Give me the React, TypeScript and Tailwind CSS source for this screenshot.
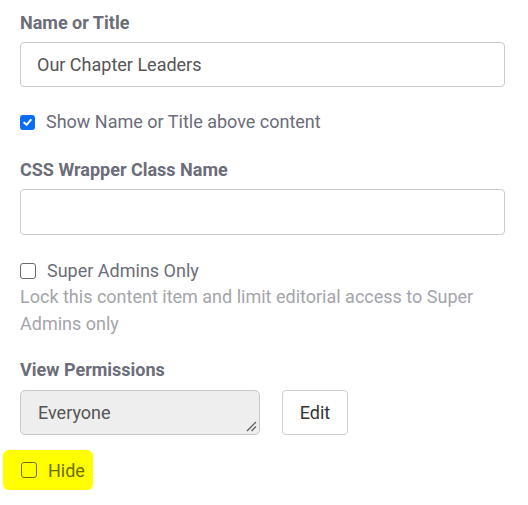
import React from "react";

function Box({ checked, olive }: { checked?: boolean; olive?: boolean }) {
  if (checked) {
    return (
      <span className="flex h-[15px] w-[15px] shrink-0 items-center justify-center rounded-[3px] bg-[#0b6cf5]">
        <svg width="11" height="11" viewBox="0 0 12 12">
          <path d="M2.5 6.2 L5 8.6 L9.6 3.2" fill="none" stroke="white" strokeWidth="2.2" strokeLinecap="round" strokeLinejoin="round" />
        </svg>
      </span>
    );
  }
  return (
    <span
      className={
        "block h-[16px] w-[16px] shrink-0 rounded-[3px] border " +
        (olive ? "border-[#6e6e08] bg-transparent" : "border-[#6b6b6b] bg-white")
      }
    />
  );
}

export default function App() {
  const font = { fontFamily: "Roboto, 'Liberation Sans', sans-serif" };
  return (
    <div className="h-[505px] w-[528px] bg-white px-[20px] pt-[11px]" style={font}>
      <div className="w-[485px]">
        <div className="text-[18px] font-bold leading-[24px] text-[#6b6d79]">Name or Title</div>
        <div className="mt-[7px] flex h-[45px] items-center rounded-[4px] border border-[#cbcbcb] px-[16px] text-[18px] text-[#555]">
          Our Chapter Leaders
        </div>
        <label className="mt-[23px] flex items-center gap-[11px] text-[18px] leading-[24px] text-[#6b6d79]">
          <Box checked />
          Show Name or Title above content
        </label>

        <div className="mt-[24px] text-[18px] font-bold leading-[24px] text-[#6b6d79]">CSS Wrapper Class Name</div>
        <div className="mt-[7px] h-[46px] rounded-[4px] border border-[#cbcbcb]" />

        <label className="mt-[24px] flex items-center gap-[11px] text-[18px] leading-[24px] text-[#6b6d79]">
          <Box />
          Super Admins Only
        </label>
        <p className="text-[18px] leading-[27px] text-[#a3a5ab]">
          Lock this content item and limit editorial access to Super Admins only
        </p>

        <div className="mt-[21px] text-[18px] font-bold leading-[24px] text-[#6b6d79]">View Permissions</div>
        <div className="mt-[8px] flex items-center gap-[22px]">
          <div className="relative flex h-[45px] w-[240px] items-center rounded-[5px] border border-[#c8c8c8] bg-[#eeeeee] px-[17px] text-[18px] text-[#555]">
            Everyone
            <svg className="absolute bottom-[2px] right-[2px]" width="12" height="12" viewBox="0 0 12 12">
              <path d="M2 11 L11 2 M6.5 11 L11 6.5" stroke="#555" strokeWidth="1.2" />
            </svg>
          </div>
          <button className="flex h-[45px] w-[66px] items-center justify-center rounded-[4px] border border-[#cfcfcf] bg-white text-[18px] text-[#333]">
            Edit
          </button>
        </div>
      </div>
      <div className="-ml-[17px] mt-[15px] flex h-[40px] w-[90px] items-center gap-[11px] rounded-[6px] bg-[#ffff00] pl-[18px] text-[18px] text-[#6e6e08]">
        <Box olive />
        Hide
      </div>
    </div>
  );
}
